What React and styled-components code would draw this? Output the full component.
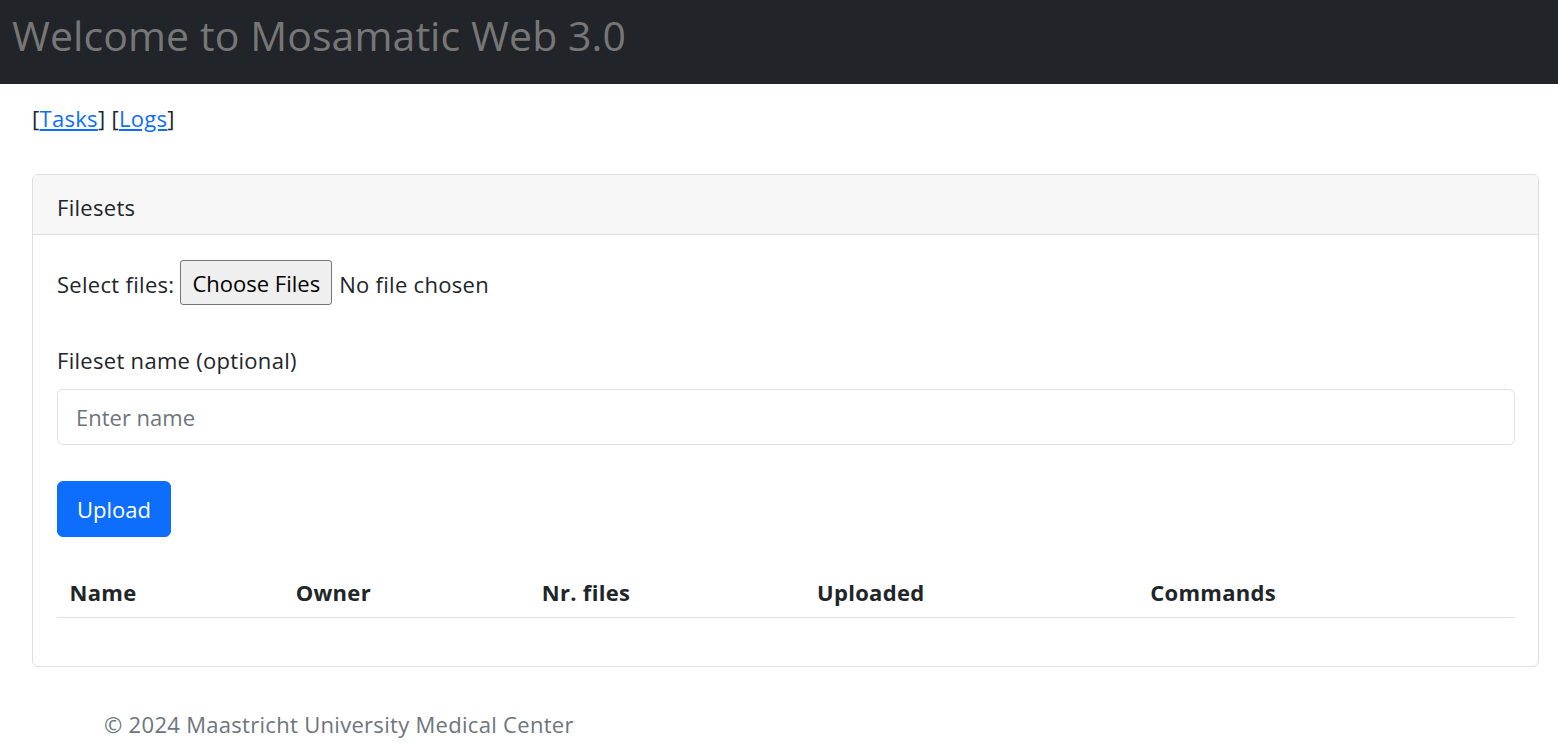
import React from "react";
import styled, { createGlobalStyle } from "styled-components";

const Global = createGlobalStyle`
  html, body { margin: 0; padding: 0; background: #fff; }
  body {
    font-family: "Open Sans", "Noto Sans", sans-serif;
    font-size: 22px;
    letter-spacing: 0.3px;
    line-height: 30px;
    color: #212529;
  }
  * { box-sizing: border-box; }
`;

const TopBar = styled.header`
  height: 84px;
  background: #212529;
  display: flex;
  align-items: flex-start;
  padding: 11px 12px 0;
`;

const Title = styled.h1`
  margin: 0;
  font-size: 41px;
  font-weight: 500;
  letter-spacing: 0.1px;
  line-height: 48px;
  color: #777;
`;

const Main = styled.main`
  padding: 19px 19px 0 32px;
`;

const NavLine = styled.div`
  height: 30px;
`;

const NavLink = styled.a`
  color: #0d6efd;
  text-decoration: underline;
`;

const Card = styled.section`
  margin-top: 41px;
  border: 1px solid #dedede;
  border-radius: 6px;
  overflow: hidden;
`;

const CardHeader = styled.div`
  padding: 17px 24px 12px;
  background: #f7f7f7;
  border-bottom: 1px solid #dedede;
`;

const CardBody = styled.div`
  padding: 25px 23px 25px 24px;
`;

const FileRow = styled.div`
  display: flex;
  align-items: center;
  height: 45px;
`;

const RowText = styled.span`
  padding-top: 3px;
`;

const FileButton = styled.button`
  height: 45px;
  margin: 0 7px 0 6px;
  padding: 0 11px;
  font: inherit;
  color: #000;
  background: #efefef;
  border: 1px solid #767676;
  border-radius: 3px;
`;

const Label = styled.label`
  display: block;
  margin-top: 40px;
  margin-bottom: 14px;
`;

const TextInput = styled.input`
  display: block;
  width: 100%;
  height: 56px;
  padding: 0 18px;
  font: inherit;
  color: #212529;
  border: 1px solid #dee2e6;
  border-radius: 6px;
  outline: none;
  &::placeholder { color: #6c757d; opacity: 1; }
`;

const PrimaryButton = styled.button`
  display: block;
  margin-top: 36px;
  height: 56px;
  padding: 0 19px;
  font: inherit;
  color: #fff;
  background: #0d6efd;
  border: 1px solid #0d6efd;
  border-radius: 6px;
`;

const Table = styled.table`
  width: 100%;
  margin-top: 30px;
  margin-bottom: 23px;
  border-collapse: collapse;
  table-layout: fixed;
`;

const Th = styled.th`
  width: ${(p) => p.$w}px;
  text-align: left;
  font-weight: 700;
  padding: 10px 12.5px;
  border-bottom: 1px solid #dee2e6;
`;

const Footer = styled.footer`
  padding: 42px 0 0 72px;
  color: #6c757d;
`;

const columns = [
  { name: "Name", w: 226 },
  { name: "Owner", w: 246 },
  { name: "Nr. files", w: 275 },
  { name: "Uploaded", w: 333 },
  { name: "Commands", w: 377 },
];

export default function App() {
  return (
    <>
      <Global />
      <TopBar>
        <Title>Welcome to Mosamatic Web 3.0</Title>
      </TopBar>
      <Main>
        <NavLine>
          [<NavLink href="#">Tasks</NavLink>] [<NavLink href="#">Logs</NavLink>]
        </NavLine>
        <Card>
          <CardHeader>Filesets</CardHeader>
          <CardBody>
            <FileRow>
              <RowText>Select files:</RowText>
              <FileButton type="button">Choose Files</FileButton>
              <RowText>No file chosen</RowText>
            </FileRow>
            <Label htmlFor="fs-name">Fileset name (optional)</Label>
            <TextInput id="fs-name" placeholder="Enter name" />
            <PrimaryButton type="button">Upload</PrimaryButton>
            <Table>
              <thead>
                <tr>
                  {columns.map((c) => (
                    <Th key={c.name} $w={c.w}>
                      {c.name}
                    </Th>
                  ))}
                </tr>
              </thead>
              <tbody />
            </Table>
          </CardBody>
        </Card>
        <Footer>© 2024 Maastricht University Medical Center</Footer>
      </Main>
    </>
  );
}
